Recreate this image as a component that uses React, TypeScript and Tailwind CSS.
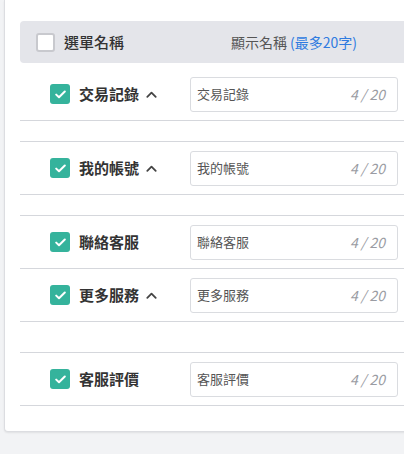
import React from "react";

type MenuItem = {
  name: string;
  expandable: boolean;
  // 展開後留白的高度
  after: string;
};

const items: MenuItem[] = [
  { name: "交易記錄", expandable: true, after: "h-[20px]" },
  { name: "我的帳號", expandable: true, after: "h-[20px]" },
  { name: "聯絡客服", expandable: false, after: "h-0" },
  { name: "更多服務", expandable: true, after: "h-[30px]" },
  { name: "客服評價", expandable: false, after: "h-0" },
];

function CheckBox({ checked }: { checked: boolean }) {
  if (!checked) {
    return <span className="block w-[19px] h-[19px] rounded-[3px] border-2 border-[#c8c9ce] bg-white" />;
  }
  return (
    <span className="flex items-center justify-center w-[20px] h-[20px] rounded-[3px] bg-[#35b39c]">
      <svg width="11" height="9" viewBox="0 0 11 9" fill="none">
        <path d="M1.2 4.6L4 7.3L9.8 1.5" stroke="white" strokeWidth="2" strokeLinecap="round" strokeLinejoin="round" />
      </svg>
    </span>
  );
}

function Row({ item, first }: { item: MenuItem; first: boolean }) {
  return (
    <div className={`box-content flex items-center h-[52px] border-b border-[#d5d7dc] ${first ? "" : "border-t"}`}>
      <div className="w-[170px] flex items-center pl-[30px]">
        <CheckBox checked />
        <span className="ml-[9px] text-[15px] font-semibold text-[#333]">{item.name}</span>
        {item.expandable && (
          <svg className="ml-[7px] mt-[1px]" width="11" height="7" viewBox="0 0 11 7" fill="none">
            <path d="M1.3 5.8L5.5 1.6L9.7 5.8" stroke="#444" strokeWidth="1.8" strokeLinecap="round" strokeLinejoin="round" />
          </svg>
        )}
      </div>
      <div className="w-[208px] h-[35px] flex items-center justify-between border border-[#dadce0] rounded-[3px] bg-white pl-[6px] pr-[12px]">
        <span className="text-[13px] text-[#555]">{item.name}</span>
        <span className="text-[14px] italic text-[#9a9ca3]">4 / 20</span>
      </div>
    </div>
  );
}

export default function App() {
  return (
    <div
      className="w-[404px] h-[454px] overflow-hidden bg-[#f2f3f5]"
      style={{ fontFamily: '"Noto Sans CJK TC", "Noto Sans", sans-serif' }}
    >
      <div className="ml-1 w-[430px] h-[432px] bg-white border border-t-0 border-[#dcdde1] rounded-b-[4px] shadow-[0_1px_2px_rgba(0,0,0,0.08)] pt-[21px] pl-[15px]">
        <div className="flex items-center h-[42px] bg-[#e4e5ea] rounded-l-[4px]">
          <div className="w-[170px] flex items-center pl-[16px]">
            <CheckBox checked={false} />
            <span className="ml-[9px] text-[15px] font-medium text-[#333]">選單名稱</span>
          </div>
          <div className="w-[208px] text-center text-[14px] text-[#555]">
            顯示名稱 <span className="text-[#2f7be0]">(最多20字)</span>
          </div>
        </div>
        <div className="h-[5px]" />
        {items.map((item, i) => (
          <React.Fragment key={item.name}>
            <Row item={item} first={i === 0 || items[i - 1].after === "h-0"} />
            <div className={item.after} />
          </React.Fragment>
        ))}
      </div>
    </div>
  );
}
